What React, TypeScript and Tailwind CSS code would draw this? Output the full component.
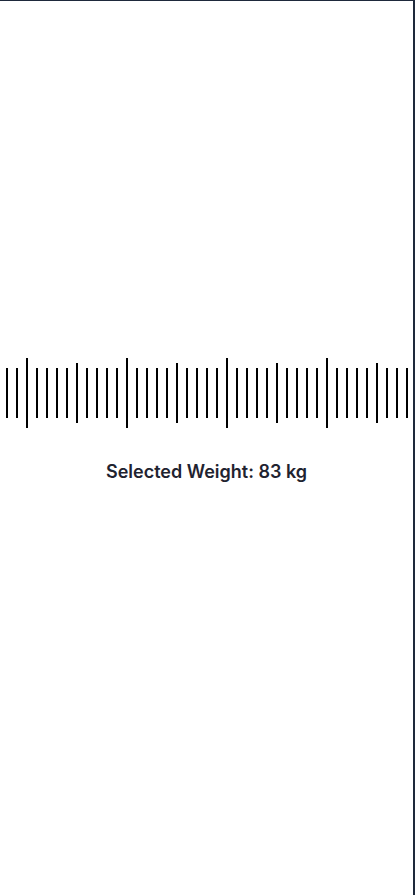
import React from "react";

export default function App() {
  const ticks = Array.from({ length: 41 }, (_, i) => i);
  return (
    <div className="w-[415px] h-[895px] bg-white border-t border-r-2 border-[#1e293b] overflow-hidden flex flex-col">
      <div className="mt-[357px] h-[70px] flex items-center gap-[8px] pl-[6px] overflow-hidden">
        {ticks.map((i) => {
          const m = (i - 2 + 100) % 10;
          const h = m === 0 ? "h-[70px]" : m === 5 ? "h-[60px]" : "h-[50px]";
          return <div key={i} className={`w-[2px] shrink-0 bg-black ${h}`} />;
        })}
      </div>
      <div
        className="mt-[30px] text-center text-[18px] leading-[28px] font-semibold text-[#1f2330]"
        style={{ fontFamily: "Inter, 'Noto Sans', sans-serif" }}
      >
        Selected Weight: 83 kg
      </div>
    </div>
  );
}
